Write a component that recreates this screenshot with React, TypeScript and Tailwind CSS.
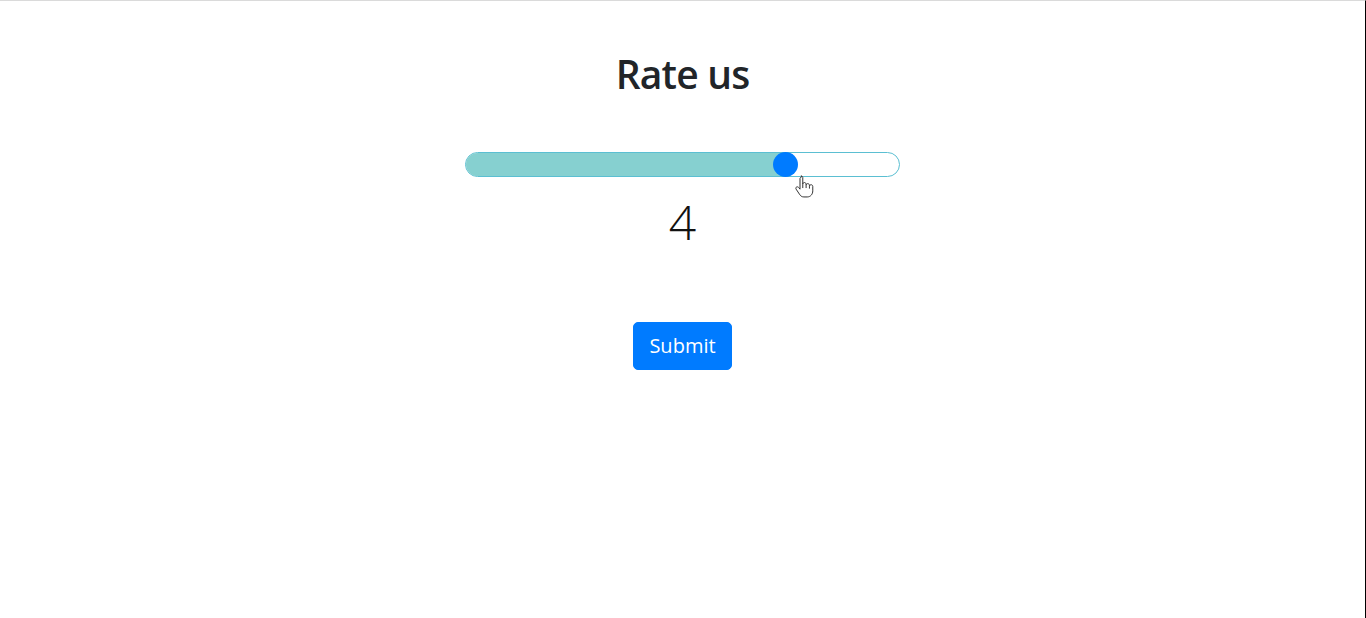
export default function App() {
  return (
    <div
      className="h-[618px] w-full border-t border-r border-t-[#dadada] border-r-black bg-white flex flex-col items-center text-[#212529]"
      style={{ fontFamily: '"Open Sans", "Noto Sans", sans-serif' }}
    >
      <h1 className="mt-[49px] text-[39px] leading-[48px] font-semibold tracking-[-0.8px]">Rate us</h1>

      <div className="relative mt-[54px] h-[25px] w-[435px] rounded-full border border-[#5bbfd2] bg-white overflow-visible">
        <div className="h-full w-[320px] rounded-l-full bg-[#86d0d0]" />
        <div className="absolute left-[307px] top-[-1px] h-[25px] w-[25px] rounded-full bg-[#007bff]" />
        <svg
          className="absolute left-[329px] top-[21px]"
          width="20"
          height="27"
          viewBox="0 0 18 24"
        >
          <path
            d="M5.5 1.5c0.8 0 1.5 0.7 1.5 1.5v6c0-0.8 0.7-1.5 1.5-1.5s1.5 0.7 1.5 1.5v1c0-0.8 0.7-1.5 1.5-1.5s1.5 0.7 1.5 1.5v1c0-0.8 0.7-1.5 1.5-1.5s1.5 0.7 1.5 1.5v4c0 3-2 5.5-5 5.5h-3c-2 0-3-1-4-2.5l-3-4.5c-0.5-0.8-0.2-1.7 0.5-2c0.7-0.3 1.4 0 1.9 0.6l1.1 1.4v-9.5c0-0.8 0.7-1.5 1.5-1.5z"
            fill="white"
            stroke="#333"
            strokeWidth="0.9"
            strokeLinejoin="round"
          />
          <path d="M7 9v3.5M10 10v2.5M13 11v2" stroke="#333" strokeWidth="0.9" fill="none" />
        </svg>
      </div>

      <div className="mt-[16px] text-[48px] leading-[58px] font-light text-[#111]">4</div>

      <button className="mt-[71px] h-[48px] rounded-[5px] border border-[#007bff] bg-[#007bff] px-[15px] text-[20px] leading-[30px] text-white">
        Submit
      </button>
    </div>
  );
}
